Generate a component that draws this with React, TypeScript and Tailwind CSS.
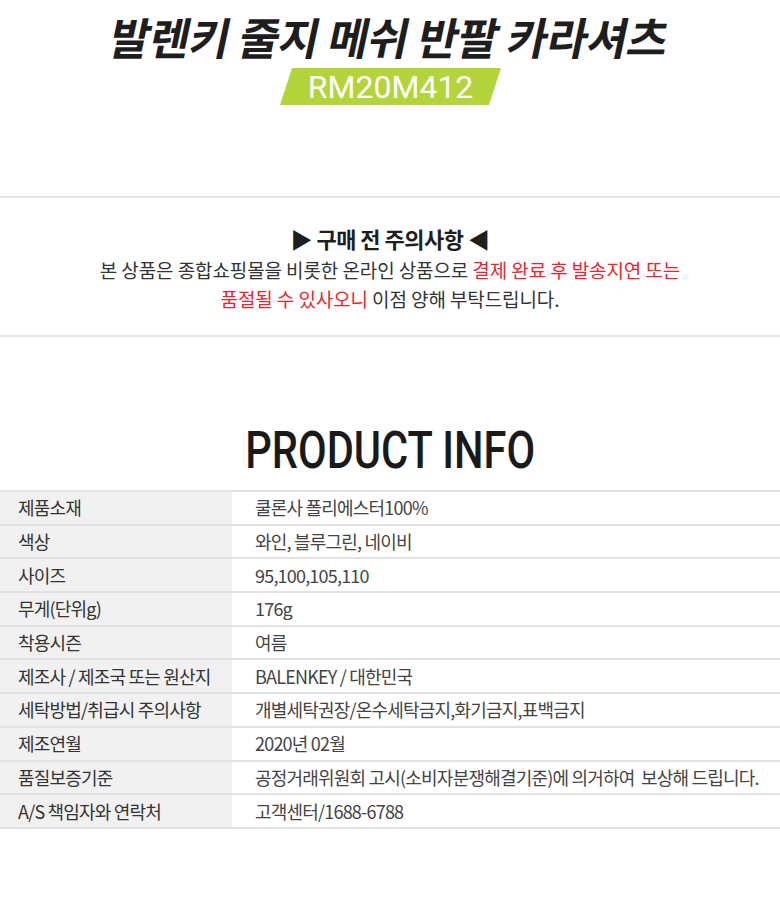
import React from 'react';

const rows: [string, string][] = [
  ['제품소재', '쿨론사 폴리에스터100%'],
  ['색상', '와인, 블루그린, 네이비'],
  ['사이즈', '95,100,105,110'],
  ['무게(단위g)', '176g'],
  ['착용시즌', '여름'],
  ['제조사 / 제조국 또는 원산지', 'BALENKEY / 대한민국'],
  ['세탁방법/취급시 주의사항', '개별세탁권장/온수세탁금지,화기금지,표백금지'],
  ['제조연월', '2020년 02월'],
  ['품질보증기준', '공정거래위원회 고시(소비자분쟁해결기준)에 의거하여  보상해 드립니다.'],
  ['A/S 책임자와 연락처', '고객센터/1688-6788'],
];

export default function App() {
  return (
    <div
      className="w-[780px] min-h-[920px] bg-white text-[#222]"
      style={{ fontFamily: '"Noto Sans CJK KR", "Noto Sans", Roboto, sans-serif' }}
    >
      {/* title */}
      <div className="pt-[10px] flex flex-col items-center">
        <h1 className="text-[44px] leading-[52px] font-bold tracking-[-0.5px] -skew-x-12 text-[#1e1e1e] whitespace-pre">
          발렌키 줄지 메쉬 반팔 카라셔츠
        </h1>
        <div className="mt-[6px] w-[209px] h-[37px] bg-[#b4d43c] -skew-x-[18deg] flex items-center justify-center">
          <span
            className="skew-x-[18deg] text-white text-[32px] leading-none"
            style={{ fontFamily: 'Roboto, "Liberation Sans", sans-serif' }}
          >
            RM20M412
          </span>
        </div>
      </div>

      {/* notice */}
      <div className="mt-[91px] border-t-2 border-b-2 border-[#e6e6e6] h-[141px] flex flex-col items-center pt-[25px]">
        <div className="text-[22px] leading-[30px] font-bold text-[#1e1e1e] tracking-[-0.5px]">
          ▶ 구매 전 주의사항 ◀
        </div>
        <p className="mt-[2px] text-[19px] leading-[29px] text-[#333] tracking-[-0.1px] text-center">
          본 상품은 종합쇼핑몰을 비롯한 온라인 상품으로{' '}
          <span className="text-[#e8262f]">결제 완료 후 발송지연 또는</span>
          <br />
          <span className="text-[#e8262f]">품절될 수 있사오니</span> 이점 양해 부탁드립니다.
        </p>
      </div>

      {/* product info */}
      <div className="pt-[82px] flex justify-center">
        <h2
          className="text-[52px] leading-[64px] font-medium text-[#1a1a1a] scale-x-[0.8]"
          style={{ fontFamily: 'Roboto, "Liberation Sans", sans-serif' }}
        >
          PRODUCT INFO
        </h2>
      </div>

      <div className="mt-[7px] border-t-2 border-[#e2e2e2]">
        {rows.map(([k, v]) => (
          <div key={k} className="flex h-[33.7px] border-b-2 border-[#e2e2e2]">
            <div className="w-[232px] bg-[#f1f1f1] pl-[18px] flex items-center text-[18px] text-[#333] tracking-[-0.8px]">
              {k}
            </div>
            <div className="flex-1 pl-[23px] flex items-center text-[18px] text-[#444] tracking-[-0.8px] whitespace-pre">
              {v}
            </div>
          </div>
        ))}
      </div>
    </div>
  );
}
